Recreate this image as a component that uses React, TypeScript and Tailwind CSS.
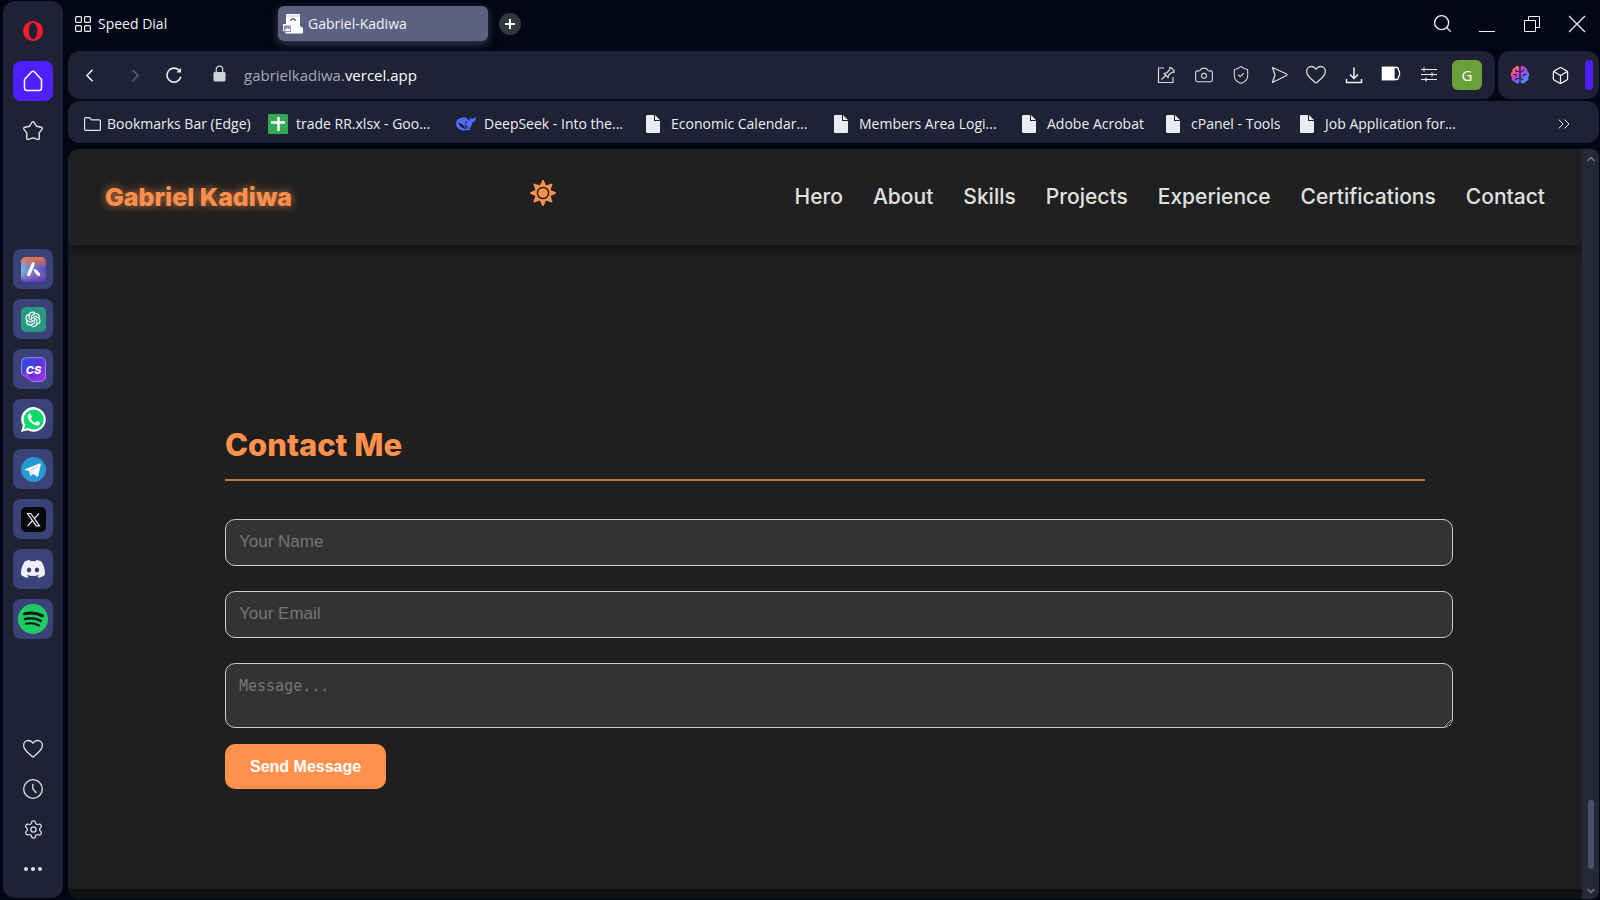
import type { ReactNode } from "react";
import {
  Camera,
  ChevronDown,
  ChevronLeft,
  ChevronRight,
  ChevronUp,
  ChevronsRight,
  Box,
  Search,
  Settings,
  ShieldCheck,
} from "lucide-react";
import { FaDiscord } from "react-icons/fa6";
import { AiOutlineOpenAI } from "react-icons/ai";

function IconButton({ label, className = "", children }: { label: string; className?: string; children: ReactNode }) {
  return (
    <button type="button" aria-label={label} className={`flex shrink-0 items-center justify-center ${className}`}>
      {children}
    </button>
  );
}

function OperaLogo() {
  return (
    <svg viewBox="0 0 20 20" className="size-5" fill="#fa1e2d">
      <path fillRule="evenodd" d="M10 0a10 10 0 1 0 0 20a10 10 0 1 0 0-20zM10 1.800c2.600 0 4.100 3.600 4.100 8.200s-1.500 8.200-4.100 8.200s-4.100-3.600-4.100-8.200s1.500-8.200 4.100-8.200z" />
      <path fill="#b3101c" d="M10 1.800c2.200 0 4.100 3.400 4.100 8.200s-1.900 8.200-4.100 8.200c3 .6 6.500-2.400 6.500-8.200s-3.500-8.800-6.500-8.200z" opacity=".4" />
    </svg>
  );
}

function HomeIcon() {
  return (
    <svg viewBox="0 0 20 22" className="h-[22px] w-5" fill="none" stroke="#fff" strokeWidth="1.500" strokeLinejoin="round">
      <path d="M1.500 9.500L8.700 1.700a1.800 1.800 0 0 1 2.600 0L18.500 9.500V18a2.500 2.500 0 0 1-2.500 2.500H4A2.500 2.500 0 0 1 1.500 18z" />
    </svg>
  );
}

function StarIcon() {
  return (
    <svg viewBox="0 0 22 22" className="size-[22px]" fill="none" stroke="currentColor" strokeWidth="1.400" strokeLinejoin="round">
      <path d="M10 2.300q1-1.300 2 0l2.500 3.900 4.900 1.100q1.500.6.700 1.900l-3 4 .3 5q-.2 1.500-1.700 1.200L11 17.900l-4.700 1.500q-1.500.3-1.700-1.200l.3-5-3-4q-.8-1.300.7-1.900l4.900-1.100z" />
    </svg>
  );
}

function HeartIcon() {
  return (
    <svg viewBox="0 0 22 22" className="size-[22px]" fill="none" stroke="currentColor" strokeWidth="1.300" strokeLinejoin="round">
      <path d="M11 5.200C9.800 3.300 8.200 2.500 6.400 2.500 3.600 2.500 1.600 4.700 1.600 7.500c0 2.600 1.500 4.600 3.300 6.300l5.200 4.700q.9.800 1.800 0l5.200-4.700c1.800-1.700 3.300-3.700 3.300-6.300 0-2.800-2-5-4.800-5-1.800 0-3.400.8-4.600 2.700z" />
    </svg>
  );
}

function AriaLogo() {
  return (
    <svg viewBox="0 0 25 25" className="size-[25px]">
      <defs>
        <linearGradient id="aria" x1="0" y1=".6" x2="1" y2=".4">
          <stop offset="0" stopColor="#67c3ee" />
          <stop offset=".4" stopColor="#6a7ce0" />
          <stop offset="1" stopColor="#4d49c8" />
        </linearGradient>
        <linearGradient id="ariaTop" x1="0" y1="0" x2="0" y2="1">
          <stop offset="0" stopColor="#ef7340" />
          <stop offset=".5" stopColor="#ef7340" stopOpacity="0" />
          <stop offset="1" stopColor="#5a22c8" stopOpacity=".8" />
        </linearGradient>
      </defs>
      <rect width="25" height="25" rx="5" fill="url(#aria)" />
      <rect width="25" height="25" rx="5" fill="url(#ariaTop)" />
      <path d="M12.200 7L7.700 17.500" stroke="#fff" strokeWidth="3.200" strokeLinecap="round" />
      <path d="M13 12.500c2 0 5.500 2.500 5.800 5.800-2 .6-4.500-1.300-5.800-5.800z" fill="#fff" stroke="#fff" />
    </svg>
  );
}

function ChatGptLogo() {
  return (
    <span className="flex size-[25px] items-center justify-center rounded-[5px] bg-[#279a7f] text-white">
      <AiOutlineOpenAI size={20} />
    </span>
  );
}

function ChatsonicLogo() {
  return (
    <svg viewBox="0 0 25 25" className="size-[25px]">
      <defs>
        <linearGradient id="cs" x1="0" y1="0" x2="1" y2="1">
          <stop offset="0" stopColor="#1b50e4" />
          <stop offset=".5" stopColor="#5a35dd" />
          <stop offset="1" stopColor="#a835e8" />
        </linearGradient>
      </defs>
      <path d="M5 .7h15a4.500 4.500 0 0 1 4.400 4.500V20a4.500 4.500 0 0 1-4.500 4.400H11L.7 17V5A4.500 4.500 0 0 1 5 .7z" fill="url(#cs)" stroke="#b17bf2" strokeWidth="1" />
      <path d="M.7 17l6.300-.5c1.500.5 1 5.500 4 7.900z" fill="#a43be6" />
      <text x="12.500" y="16.500" textAnchor="middle" fontFamily="Inter, sans-serif" fontWeight="800" fontStyle="italic" fontSize="11" fill="#fff">CS</text>
    </svg>
  );
}

function WhatsAppLogo() {
  return (
    <svg viewBox="0 0 25 25" className="size-[25px]">
      <path d="M0 25l1.800-6.400A12.300 12.300 0 1 1 6.500 23.200z" fill="#fff" />
      <path d="M3 22l1.200-4.200a10 10 0 1 1 3.100 3.100z" fill="#10d96b" />
      <path d="M8.600 6.500c-.5 0-1.900 1-1.900 3 0 2.300 2 4.500 2.500 5.100.6.700 3.200 3.700 6.800 4 1.600 0 3-1.200 3-2.800 0-.5-2.700-1.800-3.100-1.800-.5 0-1.100 1.700-1.600 1.700-.7 0-3.900-1.900-4.500-4.100 0-.5 1.100-1.200 1.100-1.700L9.700 7c-.2-.4-.6-.5-1.100-.5z" fill="#fff" />
    </svg>
  );
}

function TelegramLogo() {
  return (
    <svg viewBox="0 0 25 25" className="size-[25px]">
      <circle cx="12.500" cy="12.500" r="12.500" fill="#2799d5" />
      <path d="M4.200 12.300L18.500 6.500c1-.3 1.400.2 1.200 1.300l-2.400 11c-.2.900-.8 1-1.500.6l-3.700-2.700-1.900 1.900c-.5.500-1 .3-1.100-.4l-.9-3.900-4-1.200c-.7-.2-.7-.6 0-.8z" fill="#fff" />
      <path d="M8.600 14l7.800-5-6 5.900-.4 3" fill="none" stroke="#b9d6ea" strokeWidth=".9" />
    </svg>
  );
}

function XLogo() {
  return (
    <svg viewBox="0 0 25 25" className="size-[25px]">
      <rect width="25" height="25" rx="5" fill="#07080d" />
      <path d="M6.500 6.500h3.300l8.700 12.300h-3.300zM18 6.300l-5 5.700M11.500 13.500l-4.800 5.400" fill="none" stroke="#f1f1f4" strokeWidth="1.200" />
    </svg>
  );
}

function SpotifyLogo() {
  return (
    <svg viewBox="0 0 30 30" className="size-[30px]">
      <circle cx="15" cy="15" r="15" fill="#1fcb63" />
      <g fill="none" stroke="#0b1a14" strokeLinecap="round">
        <path d="M6.500 9.900c6-1.600 12.500-1 18 1.900" strokeWidth="3" />
        <path d="M7 15c5.500-1.400 11-.8 15.800 1.900" strokeWidth="2.500" />
        <path d="M7.800 19.800c4.500-1.100 9-.6 13.200 1.700" strokeWidth="2" />
      </g>
    </svg>
  );
}

const apps: { name: string; icon: ReactNode }[] = [
  { name: "Aria", icon: <AriaLogo /> },
  { name: "ChatGPT", icon: <ChatGptLogo /> },
  { name: "Chatsonic", icon: <ChatsonicLogo /> },
  { name: "WhatsApp", icon: <WhatsAppLogo /> },
  { name: "Telegram", icon: <TelegramLogo /> },
  { name: "X", icon: <XLogo /> },
  { name: "Discord", icon: <FaDiscord size={26} color="#f1f0f8" /> },
  { name: "Spotify", icon: <SpotifyLogo /> },
];

function Sidebar() {
  return (
    <aside className="mt-px mb-0.5 ml-[3px] flex w-[60px] shrink-0 flex-col items-center rounded-xl bg-[#1e2234] text-[#dfe2ea]">
      <IconButton label="Opera menu" className="mt-5 size-5">
        <OperaLogo />
      </IconButton>
      <IconButton label="Home" className="mt-5 size-10 rounded-lg bg-[#4f1fff]">
        <HomeIcon />
      </IconButton>
      <IconButton label="Pinned" className="mt-[18px] size-6">
        <StarIcon />
      </IconButton>
      <nav aria-label="Apps" className="mt-[106px] flex flex-col gap-[10px]">
        {apps.map((app) => (
          <IconButton key={app.name} label={app.name} className="size-10 rounded-lg bg-[#394377]">
            {app.icon}
          </IconButton>
        ))}
      </nav>
      <div className="mt-auto mb-[18px] flex flex-col gap-[18px]">
        <IconButton label="Favourites" className="size-[22px]">
          <HeartIcon />
        </IconButton>
        <IconButton label="History" className="size-[22px]">
          <svg viewBox="0 0 22 22" className="size-[22px]" fill="none" stroke="currentColor" strokeWidth="1.300" strokeLinecap="round">
            <circle cx="11" cy="11" r="9.300" />
            <path d="M10.800 6.500v4.300l3.200 3.700" />
          </svg>
        </IconButton>
        <IconButton label="Settings" className="size-[22px]">
          <Settings size={21} strokeWidth={1.400} />
        </IconButton>
        <IconButton label="More" className="size-[22px]">
          <svg viewBox="0 0 22 22" className="size-[22px]" fill="currentColor">
            <circle cx="4" cy="11" r="2" />
            <circle cx="11" cy="11" r="2" />
            <circle cx="18" cy="11" r="2" />
          </svg>
        </IconButton>
      </div>
    </aside>
  );
}

function TabBar() {
  return (
    <div className="flex h-[51px] items-center pr-[11px] pb-1 pl-[7px] text-sm text-[#f1f3f8]">
      <button type="button" className="flex w-[203px] items-center gap-[7px]">
        <svg viewBox="0 0 16 16" className="size-4" fill="none" stroke="currentColor" strokeWidth="1.200">
          <rect x=".6" y=".6" width="5.800" height="5.800" rx="1" />
          <rect x="9.600" y=".6" width="5.800" height="5.800" rx="1" />
          <rect x=".6" y="9.600" width="5.800" height="5.800" rx="1" />
          <rect x="9.600" y="9.600" width="5.800" height="5.800" rx="1" />
        </svg>
        Speed Dial
      </button>
      <button type="button" className="flex h-[35px] w-[210px] items-center gap-[5px] rounded-md bg-[#5c6181] pl-[5px] shadow-[0_3px_8px_#5c618199]">
        <svg viewBox="0 0 20 20" className="size-5" fill="#fff">
          <path d="M3 0h14v12l3 2v5.500H2.500V17H0v-7h3z" />
          <path d="M7.500 7c.5-3 4.500-3 5 0" fill="none" stroke="#6d728f" strokeWidth="1.500" />
          <path d="M3 2h14" stroke="#aeb2c8" strokeWidth=".8" />
          <path d="M1 11.500h7V18H1z" fill="#8c90ab" />
          <path d="M2 16.500l2-2.500 1.500 1.500L7 13.500V17H2z" />
        </svg>
        Gabriel-Kadiwa
      </button>
      <IconButton label="New tab" className="ml-[11px] size-[22px] rounded-full bg-[#35373f]">
        <svg viewBox="0 0 10 10" className="size-2.5" stroke="#fff" strokeWidth="2">
          <path d="M5 0v10M0 5h10" />
        </svg>
      </IconButton>
      <div className="ml-auto flex items-center gap-[23px]">
        <IconButton label="Search tabs" className="size-[22px]">
          <Search size={21} strokeWidth={1.500} />
        </IconButton>
        <IconButton label="Minimize" className="size-[22px]">
          <svg viewBox="0 0 22 22" className="size-[22px]" stroke="currentColor">
            <path d="M3 18.500h16" />
          </svg>
        </IconButton>
        <IconButton label="Restore" className="size-[22px]">
          <svg viewBox="0 0 22 22" className="size-[22px]" fill="none" stroke="currentColor">
            <path d="M3.500 7.500h11v11h-11zM7.500 7.500v-4h11v11h-4" />
          </svg>
        </IconButton>
        <IconButton label="Close" className="size-[22px]">
          <svg viewBox="0 0 22 22" className="size-[22px]" stroke="currentColor" strokeWidth="1.200">
            <path d="M3 3l16 16M19 3L3 19" />
          </svg>
        </IconButton>
      </div>
    </div>
  );
}

function BrainIcon() {
  return (
    <svg viewBox="0 0 20 20" className="size-5" fill="none">
      <defs>
        <linearGradient id="brain" x1="0" y1="0" x2="1" y2="1">
          <stop offset="0" stopColor="#ff9a2b" />
          <stop offset=".15" stopColor="#ff7a3b" />
          <stop offset=".35" stopColor="#e93bc0" />
          <stop offset=".6" stopColor="#7b5cf5" />
          <stop offset="1" stopColor="#25b4ff" />
        </linearGradient>
      </defs>
      <path d="M9.300 2C8 .5 5.500 1 5 2.800 3 3 2 5 2.600 6.600.6 7.800.3 10.500 1.800 12c-.8 2 .4 4 2.400 4.300.8 2.300 3.700 2.800 5.100 1.200zM10.700 2c1.300-1.500 3.800-1 4.300.8 2 .2 3 2.200 2.400 3.800 2 1.200 2.300 3.900.8 5.400.8 2-.4 4-2.400 4.300-.8 2.300-3.700 2.800-5.100 1.200z" fill="url(#brain)" />
      <path d="M9 6.500H6.500M3 9.500h3v2M9 13.500H6.500L5 15M11 7l2.500-1.500M17 9.500h-3l-1 2M11 13.500l2.500 1.500M13.500 5.500V4M6.500 6.500L5 5" stroke="#20243a" strokeWidth="1.100" />
    </svg>
  );
}

function AddressBar() {
  return (
    <div className="flex h-12 gap-[3px]">
      <div className="flex flex-1 items-center rounded-xl bg-[#1e2234] pr-[13px] pl-[10px] text-[#d6d9e2]">
        <IconButton label="Back" className="size-[22px] text-white">
          <ChevronLeft size={21} strokeWidth={1.700} />
        </IconButton>
        <IconButton label="Forward" className="ml-6 size-[22px] text-[#62677b]">
          <ChevronRight size={21} strokeWidth={1.500} />
        </IconButton>
        <IconButton label="Reload" className="ml-[17px] size-[22px]">
          <svg viewBox="0 0 22 22" className="size-[22px]" fill="none" stroke="#eef0f5" strokeWidth="1.600">
            <path d="M17.800 12.800A7 7 0 1 1 16 6.200l1.600 1.500" />
            <path d="M18 3.800v4.600h-4.600z" fill="#eef0f5" stroke="none" />
          </svg>
        </IconButton>
        <svg viewBox="0 0 14 18" className="mb-[3px] ml-[28px] h-[17px] w-[13px]">
          <path d="M3.500 8V4.500a3.500 3.500 0 0 1 7 0V8" fill="none" stroke="#cfd3d8" strokeWidth="1.300" />
          <rect x=".5" y="7.500" width="13" height="10" rx="1.500" fill="#cfd3d8" />
        </svg>
        <button type="button" className="ml-[18px] text-[15px] text-[#a3a9bb]">
          gabrielkadiwa.<span className="text-white">vercel.app</span>
        </button>
        <div className="ml-auto flex w-[285px] items-center justify-between">
          <IconButton label="Edit page" className="size-[22px]">
            <svg viewBox="0 0 22 22" className="size-[22px]" fill="none" stroke="currentColor" strokeWidth="1.200" strokeLinejoin="round">
              <path d="M9 4H3.500v14.500h14.500V13" />
              <path d="M6.500 15.500L10.500 11.500M9 9.500l4 4 1-3 3.500-2.500L19 8.500 19 6.500 16 3.500 14.500 3.800 14.800 5.500 12 8.700z" />
            </svg>
          </IconButton>
          <IconButton label="Snapshot" className="size-[22px]">
            <Camera size={20} strokeWidth={1.300} />
          </IconButton>
          <IconButton label="Ad blocker" className="size-[22px]">
            <ShieldCheck size={20} strokeWidth={1.300} />
          </IconButton>
          <IconButton label="Send to Flow" className="size-[22px]">
            <svg viewBox="0 0 22 22" className="size-[22px]" fill="none" stroke="currentColor" strokeWidth="1.300" strokeLinejoin="round">
              <path d="M4.500 3.500L18.500 10a1 1 0 0 1 0 1.500L4.500 18.500 7 11z" />
            </svg>
          </IconButton>
          <IconButton label="Add to favourites" className="size-[22px]">
            <HeartIcon />
          </IconButton>
          <IconButton label="Downloads" className="size-[22px]">
            <svg viewBox="0 0 22 22" className="size-[22px]" fill="none" stroke="#f1f3f6" strokeWidth="1.500">
              <path d="M11 3.500v10.500M7 10.500l4 4 4-4M3.500 15v3.500h15V15" />
            </svg>
          </IconButton>
          <IconButton label="Battery saver" className="size-[22px]">
            <svg viewBox="0 0 22 22" className="size-[22px]" fill="none" stroke="#fff" strokeWidth="1.300">
              <path d="M2.500 3.500h14a2 2 0 0 1 2 2v1l1 1v4l-1 1v1a2 2 0 0 1-2 2h-14z" />
              <path d="M2.500 3.500H14v12H2.500z" fill="#fff" />
            </svg>
          </IconButton>
          <IconButton label="Easy setup" className="size-[22px]">
            <svg viewBox="0 0 22 22" className="size-[22px]" stroke="#eef0f5" strokeWidth="1.200">
              <path d="M3 5.500h16M3 10.500h16M3 15.500h16M6 3.500v4M14 8.500v4M8 13.500v4" />
            </svg>
          </IconButton>
        </div>
        <button type="button" className="ml-3 size-[30px] rounded-md bg-[#69a038] text-[15px] text-white">
          G
        </button>
      </div>
      <div className="flex w-[101px] items-center rounded-xl bg-[#1e2234] pl-3 text-white">
        <IconButton label="Aria AI" className="size-5">
          <BrainIcon />
        </IconButton>
        <IconButton label="Extensions" className="ml-5 size-5">
          <Box size={19} strokeWidth={1.500} />
        </IconButton>
        <span className="ml-[15px] h-[30px] w-2 rounded-sm bg-[#4f1fff]" />
      </div>
    </div>
  );
}

function FileIcon() {
  return (
    <svg viewBox="0 0 14 18" className="h-[18px] w-3.5 shrink-0" fill="#e9edf1">
      <path d="M1 0h7v6h6v11a1 1 0 0 1-1 1H1a1 1 0 0 1-1-1V1a1 1 0 0 1 1-1z" />
      <path d="M9 0l5 5H9z" />
    </svg>
  );
}

function FolderIcon() {
  return (
    <svg viewBox="0 0 17 14" className="h-3.5 w-[17px] shrink-0" fill="none" stroke="#e3e6ec" strokeWidth="1.200" strokeLinejoin="round">
      <path d="M.6 1.600a1 1 0 0 1 1-1h4l2 2.200h7.800a1 1 0 0 1 1 1v8.600a1 1 0 0 1-1 1H1.600a1 1 0 0 1-1-1z" />
    </svg>
  );
}

function SheetsIcon() {
  return (
    <svg viewBox="0 0 20 20" className="size-5 shrink-0">
      <rect width="20" height="20" rx="1.500" fill="#34a853" />
      <path d="M10.500 3v14M3 8.500h14" stroke="#fff" strokeWidth="2.500" />
    </svg>
  );
}

function DeepSeekIcon() {
  return (
    <svg viewBox="0 0 20 16" className="h-4 w-5 shrink-0">
      <path
        fill="#4d6bfe"
        d="M7 1.500c2-.5 3 .2 4.200 1.200 1 .8 1.700 1.800 2.800 2.300-.6-1.500-.2-2.800.2-4 .5 1.100 1.300 1.700 2.600 1.600 1-.1 2-.7 3.100-1.300.3 2.700-1 4.700-3.600 5.200-.3 2.400-1.200 4.500-2.900 6l1.600 1.400c-1.200.6-2.600.3-3.700-.2C6.400 16 .9 13.500.1 8.300-.3 4.500 2.500 1.800 7 1.500z"
      />
      <path fill="#1e2234" d="M2.300 6.500c2.600.3 5 2 6.500 5l1.500.8-2-4c1.300.2 2.600 1.700 3.500 3.200-1 1.500-2.300 1.700-4 .9C5 11.500 3 9.500 2.300 6.500z" />
      <circle cx="10" cy="6.500" r="1" fill="#1e2234" />
    </svg>
  );
}

const bookmarks = [
  { label: "Bookmarks Bar (Edge)", icon: <FolderIcon />, width: "w-[184px]", gap: "gap-1.5" },
  { label: "trade RR.xlsx - Goo...", icon: <SheetsIcon />, width: "w-[188px]", gap: "gap-2" },
  { label: "DeepSeek - Into the...", icon: <DeepSeekIcon />, width: "w-[190px]", gap: "gap-2" },
  { label: "Economic Calendar...", icon: <FileIcon />, width: "w-[188px]", gap: "gap-[11px]" },
  { label: "Members Area Logi...", icon: <FileIcon />, width: "w-[188px]", gap: "gap-[11px]" },
  { label: "Adobe Acrobat", icon: <FileIcon />, width: "w-[144px]", gap: "gap-[11px]" },
  { label: "cPanel - Tools", icon: <FileIcon />, width: "w-[134px]", gap: "gap-[11px]" },
  { label: "Job Application for...", icon: <FileIcon />, width: "w-[188px]", gap: "gap-[11px]" },
];

function BookmarksBar() {
  return (
    <nav aria-label="Bookmarks" className="mt-0.5 flex h-[42px] items-center rounded-xl bg-[#1e2234] pt-1 pr-[25px] pl-4 text-sm whitespace-nowrap text-[#eceef3]">
      {bookmarks.map((b) => (
        <a key={b.label} href="#bookmark" className={`flex items-center ${b.width} ${b.gap}`}>
          {b.icon}
          {b.label}
        </a>
      ))}
      <IconButton label="More bookmarks" className="ml-auto size-5">
        <ChevronsRight size={22} strokeWidth={1.200} />
      </IconButton>
    </nav>
  );
}

function SunIcon() {
  const rays = [0, 45, 90, 135, 180, 225, 270, 315];
  return (
    <svg viewBox="-13 -13 26 26" className="size-[26px]" fill="#ff914d">
      {rays.map((angle) => (
        <path key={angle} d="M-3.300-7L-.6-13H.6L3.300-7z" transform={`rotate(${angle})`} />
      ))}
      <circle r="8.200" />
      <circle r="5.600" fill="none" stroke="#202020" strokeWidth="1.500" />
    </svg>
  );
}

const links = ["Hero", "About", "Skills", "Projects", "Experience", "Certifications", "Contact"];

function SiteHeader() {
  return (
    <header className="flex h-24 shrink-0 items-center justify-between bg-[#202020] px-[37px] font-['Inter',sans-serif] shadow-[0_4px_12px_rgba(0,0,0,0.5)]">
      <a href="#hero" className="text-[25px] leading-8 font-extrabold text-[#ff914d] [text-shadow:0_0_8px_#ff914dcc]">
        Gabriel Kadiwa
      </a>
      <button type="button" aria-label="Toggle theme" className="pb-2">
        <SunIcon />
      </button>
      <nav aria-label="Sections" className="flex gap-[30px] text-[21px] leading-8 font-medium text-[#e0e0e0]">
        {links.map((link) => (
          <a key={link} href={`#${link.toLowerCase()}`}>
            {link}
          </a>
        ))}
      </nav>
    </header>
  );
}

function ContactForm() {
  const field =
    "box-content block w-full rounded-[10px] border border-[#ccc] bg-[#333] text-white placeholder:text-[#757575]";
  const line = "mb-[25px] h-[19px] px-[13px] pt-3 pb-3.5 text-[17px]";
  return (
    <section id="contact" className="mx-auto w-full max-w-[1200px] flex-1 pt-44">
      <h2 className="border-b-2 border-[#bc7844] pb-2.5 font-['Inter',sans-serif] text-[31px] leading-[48px] font-extrabold text-[#ff914d]">
        Contact Me
      </h2>
      <form className="mt-[38px] font-['Liberation_Sans',Arial,sans-serif]" onSubmit={(e) => e.preventDefault()}>
        <input type="text" aria-label="Your Name" placeholder="Your Name" className={`${field} ${line}`} />
        <input type="email" aria-label="Your Email" placeholder="Your Email" className={`${field} ${line}`} />
        <textarea
          aria-label="Message"
          placeholder="Message..."
          className={`${field} h-[39px] px-[13px] py-3 font-['DejaVu_Sans_Mono',monospace] text-[15px] leading-5`}
        />
        <button type="submit" className="mt-4 h-[45px] rounded-[10px] bg-[#ff914d] px-[25px] text-base font-bold text-white">
          Send Message
        </button>
      </form>
    </section>
  );
}

function Scrollbar() {
  return (
    <div className="flex w-[17px] shrink-0 flex-col items-center rounded-r-lg bg-[#252936] text-[#77797f]">
      <ChevronUp size={12} strokeWidth={3} className="mt-1" />
      <span className="mt-auto h-[69px] w-1.5 rounded-full bg-[#4b5069]" />
      <ChevronDown size={12} strokeWidth={3} className="mt-4 mb-0.5" />
    </div>
  );
}

export default function App() {
  return (
    <div className="flex h-screen overflow-hidden bg-[#030614] font-['Open_Sans',sans-serif]">
      <Sidebar />
      <div className="ml-[5px] flex min-w-0 flex-1 flex-col pr-px pb-px">
        <TabBar />
        <AddressBar />
        <BookmarksBar />
        <div className="mt-1.5 flex min-h-0 flex-1">
          <main className="flex min-w-0 flex-1 flex-col overflow-hidden rounded-l-xl bg-[#1f1f1f]">
            <SiteHeader />
            <ContactForm />
            <footer className="h-2.5 shrink-0 bg-[#111]" />
          </main>
          <Scrollbar />
        </div>
      </div>
    </div>
  );
}
